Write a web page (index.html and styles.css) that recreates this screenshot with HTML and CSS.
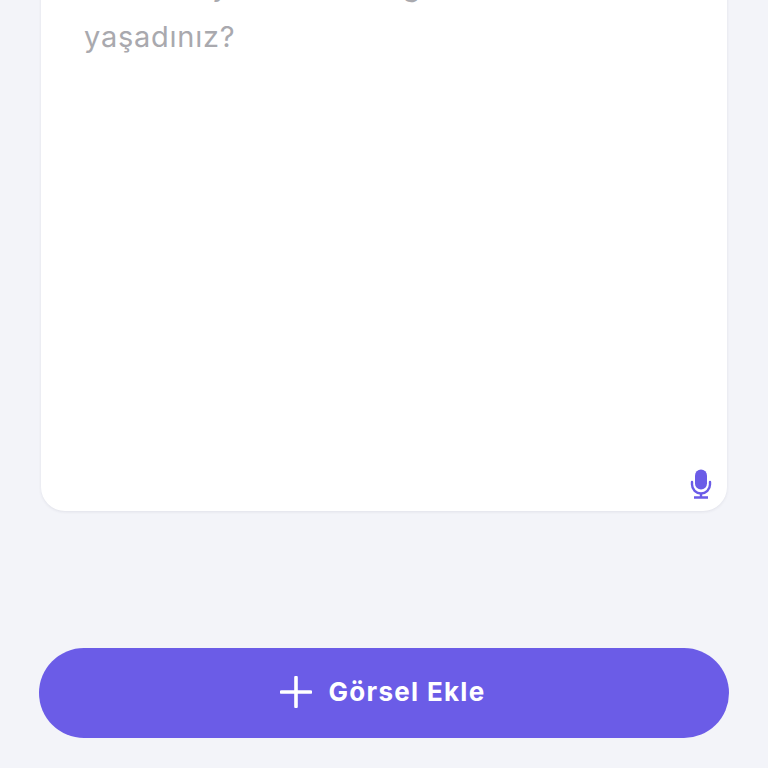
FILE: index.html
```html
<!DOCTYPE html>
<html lang="tr">
<head>
<meta charset="utf-8">
<title>Görsel Ekle</title>
<link rel="stylesheet" href="styles.css">
</head>
<body>
<main class="screen">
  <section class="card">
    <p class="placeholder">Bu hafta yine sıkı bir ağrı mı<br>yaşadınız?</p>
    <svg class="mic" viewBox="0 0 22 30" aria-hidden="true">
      <rect x="5" y="0.5" width="12" height="20" rx="6" fill="#6b5ce7"/>
      <path d="M2 13v2.5a9 9 0 0 0 18 0V13" fill="none" stroke="#6b5ce7" stroke-width="2.400" stroke-linecap="round"/>
      <path d="M11 24.500v3M4 28.500h14" fill="none" stroke="#6b5ce7" stroke-width="2.400"/>
    </svg>
  </section>
  <button class="add" type="button">
    <svg class="plus" viewBox="0 0 32 32" aria-hidden="true">
      <path d="M16 1.500v29M1.500 16h29" fill="none" stroke="#fff" stroke-width="3.600" stroke-linecap="round"/>
    </svg>
    <span class="add-label">Görsel Ekle</span>
  </button>
</main>
</body>
</html>
```
FILE: styles.css
```css
* { box-sizing: border-box; }
html, body { margin: 0; height: 100%; overflow: hidden; background: #f3f4f9; }
.screen {
  width: 768px;
  height: 768px;
  overflow: hidden;
  padding: 0 39px;
  display: flex;
  flex-direction: column;
  font-family: "Inter", "Liberation Sans", sans-serif;
}
.card {
  margin: -60px 2px 0;
  height: 571px;
  flex: none;
  background: #fff;
  border-radius: 24px;
  box-shadow: 0 1px 3px rgba(40, 40, 80, .09);
  padding: 0 15px 12px 43px;
  display: flex;
  flex-direction: column;
}
.placeholder {
  margin: 0;
  padding-top: 20px;
  font-size: 29px;
  letter-spacing: .75px;
  line-height: 51px;
  color: #a9a9ae;
}
.mic {
  width: 22px;
  height: 30px;
  margin: auto 0 0 auto;
}
.add {
  margin-top: 137px;
  height: 90px;
  flex: none;
  border: 0;
  border-radius: 45px;
  background: #6b5ce7;
  color: #fff;
  font: 700 26px "Inter", "Liberation Sans", sans-serif;
  letter-spacing: 1.300px;
  display: flex;
  align-items: center;
  justify-content: center;
  gap: 16px;
  padding: 0 2px 2px 0;
}
.add-label { line-height: 32px; }
.plus { width: 32px; height: 32px; }
```
